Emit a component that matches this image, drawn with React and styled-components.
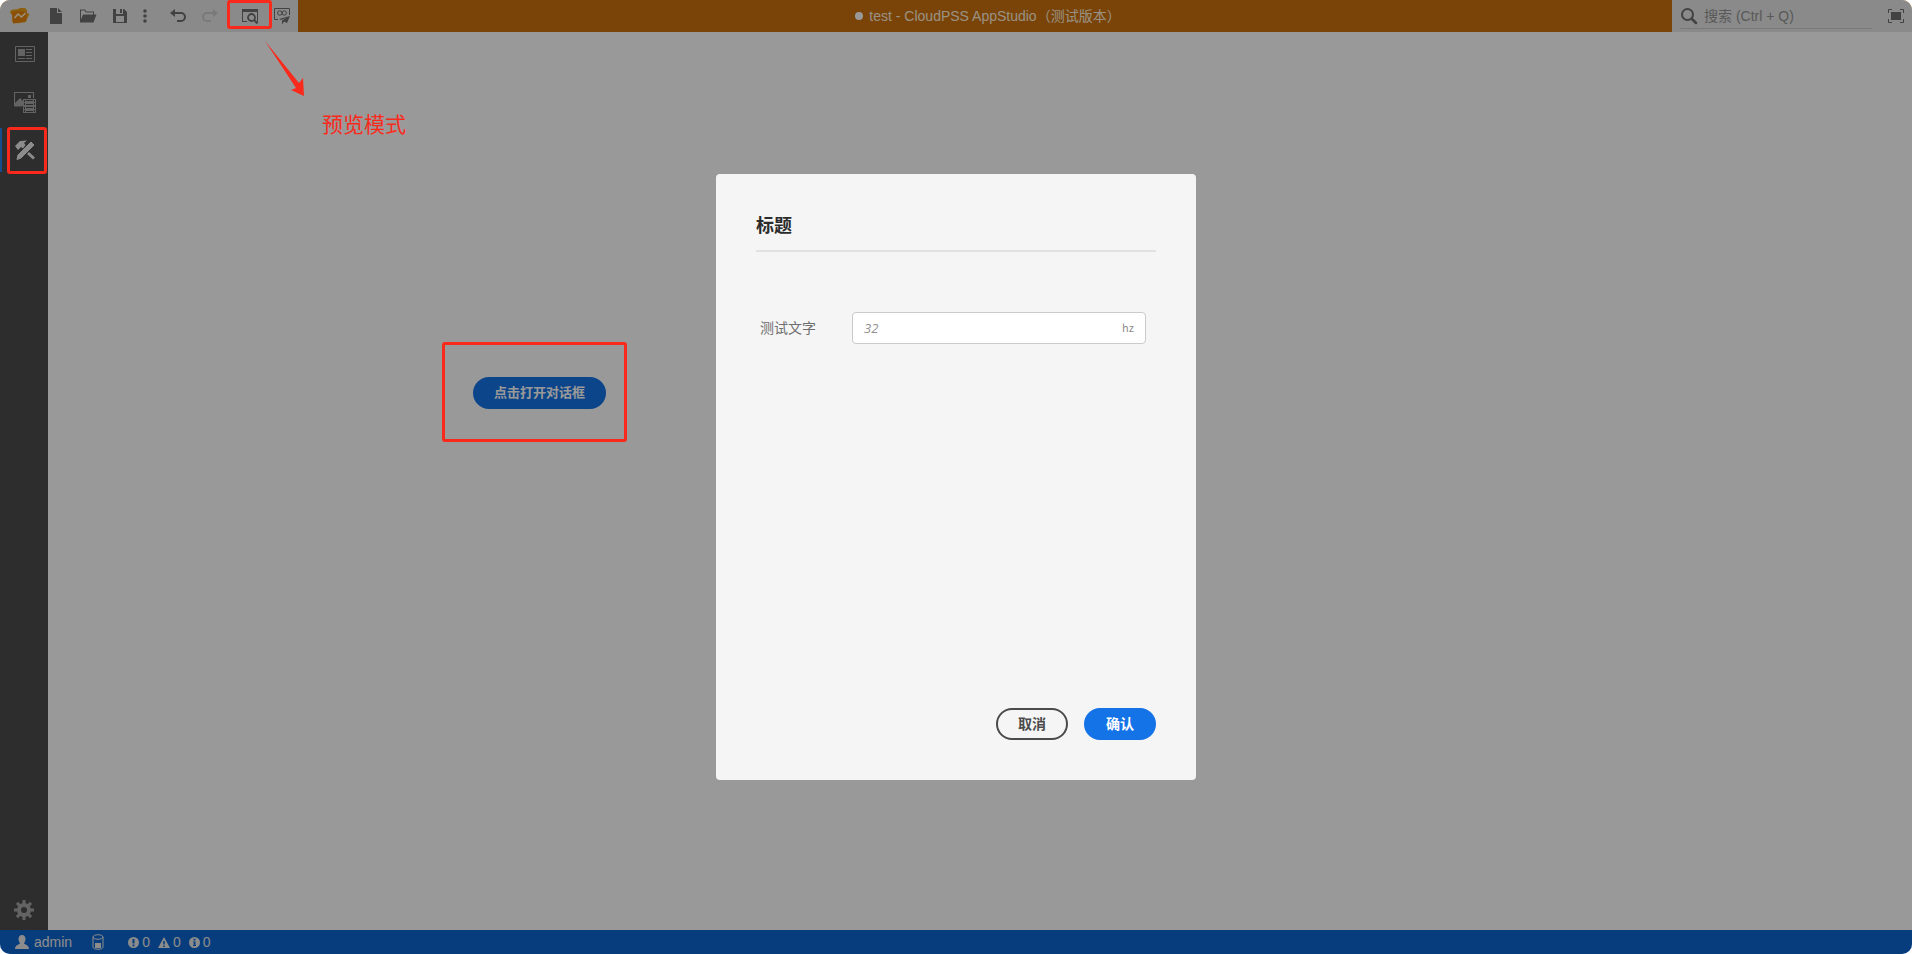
import React from "react";
import styled, { createGlobalStyle } from "styled-components";

const GlobalStyle = createGlobalStyle`
  * {
    box-sizing: border-box;
  }

  body {
    margin: 0;
    background-color: #ffffff;
    font-family: "Liberation Sans", "Noto Sans CJK SC", sans-serif;
    font-size: 14px;
  }

  button,
  input {
    font-family: inherit;
    font-size: inherit;
  }
`;

const Page = styled.div`
  position: relative;
  display: flex;
  flex-direction: column;
  height: 100vh;
  border-radius: 10px;
  overflow: hidden;
`;

// Header
const TopBar = styled.header`
  display: flex;
  height: 32px;
  flex-shrink: 0;
  background-color: #cb710c;
`;

const Toolbar = styled.nav`
  display: flex;
  background-color: #e6e6e6;
`;

const ToolButton = styled.button`
  display: flex;
  align-items: center;
  justify-content: center;
  flex-shrink: 0;
  width: ${(props) => props.$width || 32}px;
  height: 32px;
  margin: 0 ${(props) => props.$gap || 0}px 0 0;
  padding: 0;
  border: 0;
  background: none;
  color: #6e6e6e;
  cursor: pointer;

  &:disabled {
    color: #cacaca;
  }
`;

const DocTitle = styled.h1`
  flex: 1;
  display: flex;
  align-items: center;
  justify-content: center;
  gap: 6px;
  margin: 0;
  padding-left: 6px;
  color: #fff0dd;
  font-size: 14px;
  font-weight: 400;
  line-height: 20px;
  white-space: pre;
`;

const UnsavedDot = styled.span`
  width: 8px;
  height: 8px;
  border-radius: 50%;
  background-color: #ffffff;
`;

const SearchArea = styled.div`
  display: flex;
  gap: 8px;
  width: 240px;
  padding-left: 8px;
  background-color: #e6e6e6;
`;

const SearchBox = styled.label`
  flex: 1;
  display: flex;
  align-items: center;
  gap: 6px;
  min-width: 0;
  height: 29px;
  padding-top: 3px;
  border-bottom: 1px solid #cacaca;
  color: #6e6e6e;
`;

const SearchInput = styled.input`
  flex: 1;
  min-width: 0;
  padding: 0;
  border: 0;
  outline: 0;
  background: none;

  &::placeholder {
    color: #959595;
    opacity: 1;
  }
`;

// Body
const Body = styled.div`
  flex: 1;
  display: flex;
  min-height: 0;
`;

const SideBar = styled.nav`
  display: flex;
  flex-direction: column;
  gap: 4px;
  width: 48px;
  background-color: #4b4b4b;
`;

const SideButton = styled.button`
  display: flex;
  align-items: center;
  justify-content: center;
  height: 44px;
  padding: 0;
  border: solid ${(props) => (props.$active ? "#2680eb" : "transparent")};
  border-width: 0 0 0 2px;
  background: none;
  color: ${(props) => (props.$active ? "#eaeaea" : "#a5a5a5")};
  cursor: pointer;

  &:last-child {
    height: 40px;
    margin-top: auto;
    border-left: 0;
  }
`;

const Canvas = styled.main`
  position: relative;
  flex: 1;
  background-color: #ffffff;
`;

const Button = styled.button`
  min-width: 72px;
  height: 32px;
  padding: 0 ${(props) => (props.$small ? 19 : 18)}px 2px;
  border: 2px solid ${(props) => (props.$outline ? "#4b4b4b" : "#1473e6")};
  border-radius: 16px;
  background-color: ${(props) => (props.$outline ? "transparent" : "#1473e6")};
  color: ${(props) => (props.$outline ? "#4b4b4b" : "#ffffff")};
  font-family: "Noto Sans CJK SC", sans-serif;
  font-size: ${(props) => (props.$small ? 13 : 14)}px;
  font-weight: 700;
  line-height: 20px;
  cursor: pointer;
`;

// Free placed widget on the canvas
const Widget = styled.div`
  position: absolute;
  left: 425px;
  top: 345px;
`;

// Status bar
const StatusBar = styled.footer`
  display: flex;
  align-items: center;
  height: 24px;
  flex-shrink: 0;
  padding-left: 15px;
  background-color: #0d66d0;
  color: #eaeaea;
`;

const StatusItem = styled.span`
  display: flex;
  align-items: center;
  gap: ${(props) => props.$gap || 3}px;
  margin-right: ${(props) => props.$space || 8}px;
`;

// Dialog
const Overlay = styled.div`
  position: absolute;
  inset: 0;
  display: flex;
  align-items: center;
  justify-content: center;
  background-color: rgba(0, 0, 0, 0.4);
`;

const Dialog = styled.section`
  display: flex;
  flex-direction: column;
  width: 480px;
  min-height: 606px;
  padding: 40px;
  border-radius: 4px;
  background-color: #f5f5f5;
  font-family: "Noto Sans CJK SC", sans-serif;
`;

const DialogTitle = styled.h2`
  margin: 0;
  padding-bottom: 16px;
  border-bottom: 2px solid #e1e1e1;
  color: #2c2c2c;
  font-size: 18px;
  font-weight: 700;
  line-height: 20px;
`;

const Field = styled.div`
  display: flex;
  align-items: center;
  margin-top: 60px;
  padding: 0 10px 0 4px;
`;

const FieldLabel = styled.label`
  width: 92px;
  padding-bottom: 2px;
  color: #6e6e6e;
  font-size: 14px;
  line-height: 20px;
`;

const InputBox = styled.div`
  flex: 1;
  display: flex;
  align-items: center;
  height: 32px;
  padding: 0 11px;
  border: 1px solid #cacaca;
  border-radius: 4px;
  background-color: #ffffff;
`;

const Input = styled.input`
  flex: 1;
  min-width: 0;
  padding: 0;
  border: 0;
  outline: 0;
  background: none;
  font-family: "Open Sans", "Noto Sans", sans-serif;
  font-size: 13px;

  &::placeholder {
    color: #8e8e8e;
    font-style: italic;
    opacity: 1;
  }
`;

const Unit = styled.span`
  padding-bottom: 2px;
  color: #8e8e8e;
  font-size: 11px;
  line-height: 16px;
`;

const DialogFooter = styled.div`
  display: flex;
  justify-content: flex-end;
  gap: 16px;
  margin-top: auto;
`;

// Guide marks drawn over the app
const Marker = styled.div`
  position: absolute;
  left: ${(props) => props.$x}px;
  top: ${(props) => props.$y}px;
  width: ${(props) => props.$w}px;
  height: ${(props) => props.$h}px;
  border: 3px solid #f92a1c;
  border-radius: 3px;
  pointer-events: none;
`;

const Arrow = styled.svg`
  position: absolute;
  left: 264px;
  top: 40px;
`;

const MarkerText = styled.span`
  position: absolute;
  left: 322px;
  top: 108px;
  color: #f92a1c;
  font-family: "Noto Sans CJK SC", sans-serif;
  font-size: 21px;
  line-height: 30px;
`;

const Icon = ({ w = 18, h = 18, children }) => (
  <svg width={w} height={h} viewBox={`0 0 ${w} ${h}`} fill="currentColor" aria-hidden="true">
    {children}
  </svg>
);

const LogoIcon = () => (
  <Icon w={20} h={18}>
    <path d="M4 2.500 8 2l2-1h5l2 2v3l2.500 1L17 12l-1 3-6 1-7 .5L2 13l.5-4L0 5.500 1 3z" fill="#e8a11c" />
    <path d="m2 5 6-1 9 1-1 9-6 1.500-7 .5z" fill="#e8820c" />
    <path d="m4.500 11 3.500-4 3.500 3 4-4" fill="none" stroke="#fff3d0" strokeWidth="1.600" />
  </Icon>
);

const FileIcon = () => (
  <Icon w={12} h={16}>
    <path d="M0 0h7v5h5v11H0zM8 0l4 4H8z" />
  </Icon>
);

const FolderIcon = () => (
  <Icon w={18} h={14}>
    <path d="M1 0.500h5l1.500 2H15V5.500h2.500L14.500 13.500H1zM2 10.500 4 5.500h10v-2H7l-1.500-2H2z" fillRule="evenodd" />
  </Icon>
);

const SaveIcon = () => (
  <Icon w={14} h={14}>
    <path d="M0 0h3v5h7V0h1l3 3v11H0zm3 7v6h8V7zM7 0h2v4H7z" fillRule="evenodd" />
  </Icon>
);

const MoreIcon = () => (
  <Icon w={4} h={14}>
    <circle cx="2" cy="2" r="1.800" />
    <circle cx="2" cy="7" r="1.800" />
    <circle cx="2" cy="12" r="1.800" />
  </Icon>
);

const UndoIcon = () => (
  <Icon w={16} h={14}>
    <path d="M5 0v8L0 4z" />
    <path d="M4 4h7a4 4 0 0 1 0 8H7" fill="none" stroke="currentColor" strokeWidth="2" />
  </Icon>
);

const RedoIcon = () => (
  <Icon w={16} h={14}>
    <path d="M11 0v8l5-4z" />
    <path d="M12 4H5a4 4 0 0 0 0 8h4" fill="none" stroke="currentColor" strokeWidth="2" />
  </Icon>
);

const PreviewIcon = () => (
  <Icon w={16} h={16}>
    <path d="M0 1h16v13h-1V4H1v9h4v1H0z" />
    <circle cx="9.500" cy="9.500" r="3.500" fill="none" stroke="currentColor" strokeWidth="1.800" />
    <path d="m12 12 3.500 3.500" stroke="currentColor" strokeWidth="2" />
  </Icon>
);

const PublishIcon = () => (
  <Icon w={16} h={18}>
    <path d="M4 12.500H.5V1.500h15V8" fill="none" stroke="currentColor" />
    <circle cx="5.800" cy="6" r="2.200" fill="none" stroke="currentColor" />
    <circle cx="10.200" cy="6" r="2.200" fill="none" stroke="currentColor" />
    <path d="m16 9-3 7-3-1.500L8 17.500v-4l5-3-6 2.500-2-1z" />
  </Icon>
);

const SearchIcon = () => (
  <Icon w={18} h={18}>
    <circle cx="7.500" cy="7.500" r="5.500" fill="none" stroke="currentColor" strokeWidth="2" />
    <path d="m12 12 4 4" stroke="currentColor" strokeWidth="2.500" strokeLinecap="round" />
  </Icon>
);

const FullScreenIcon = () => (
  <Icon w={16} h={14}>
    <path d="M.5 4V.5H4m8 0h3.500V4m0 6v3.500H12m-8 0H.5V10" fill="none" stroke="currentColor" />
    <path d="M3 3h10v8H3z" />
  </Icon>
);

const LayoutIcon = () => (
  <Icon w={20} h={16}>
    <path d="M.5.5h19v15H.5z" fill="none" stroke="currentColor" />
    <path d="M3 3h7v7H3zM11 3h6v1h-6zM11 6h6v1h-6zM11 9h6v1h-6zM3 12h7v1H3zM11 12h6v1h-6z" />
  </Icon>
);

const MediaIcon = () => (
  <Icon w={22} h={22}>
    <path d="M.5 15V1.500h19V7M.5 15H8" fill="none" stroke="currentColor" strokeWidth="1.200" />
    <path d="m1 12 5-5 3 3v5H1zM14 4h3v3h-3z" />
    <path
      d="M9 8h13v14H9zm1 1v2h1V9zm0 3v2h1v-2zm0 4v2h1v-2zm0 3v2h1v-2zM20 9v2h1V9zm0 3v2h1v-2zm0 4v2h1v-2zm0 3v2h1v-2zM12 9v5h7V9zm0 7v5h7v-5z"
      fillRule="evenodd"
    />
    <path d="M12 10h7v3h-7zm0 7h7v3h-7z" />
  </Icon>
);

const ToolsIcon = () => (
  <Icon w={20} h={20}>
    <path d="m0 6 5-5 7-.5L9 3l1.500 2L8 8.500 6 7 3 10z" />
    <path d="m16 2 3 3L6 18l-4 1.500L3 15z" stroke="currentColor" />
    <path d="m13 13 6 5.500" stroke="currentColor" strokeWidth="3" />
  </Icon>
);

const GearIcon = () => (
  <Icon w={20} h={20}>
    <circle cx="10" cy="10" r="5" fill="none" stroke="currentColor" strokeWidth="4" />
    {[0, 45, 90, 135].map((angle) => (
      <path
        key={angle}
        d="M10 0v4m0 12v4"
        stroke="currentColor"
        strokeWidth="3"
        transform={`rotate(${angle} 10 10)`}
      />
    ))}
  </Icon>
);

const UserIcon = () => (
  <Icon w={14} h={14}>
    <path d="M7 0c2.500 0 3.500 2 3.500 4S9.500 7.500 9 8.200c0 1.300 5 1.300 5 5.800H0c0-4.500 5-4.500 5-5.800C4.500 7.500 3.500 6 3.500 4S4.500 0 7 0z" />
  </Icon>
);

const DatabaseIcon = () => (
  <Icon w={12} h={16}>
    <path
      d="M1 3v10c0 3 10 3 10 0V3M1 3c0-3 10-3 10 0s-10 3-10 0"
      fill="none"
      stroke="currentColor"
    />
    <path d="M3 9h6v5H3z" />
  </Icon>
);

const ErrorIcon = () => (
  <Icon w={11} h={11}>
    <path d="M5.500 0a5.500 5.500 0 1 0 0 11 5.500 5.500 0 0 0 0-11zM4.500 2h2v4.500h-2zm0 5.500h2v1.700h-2z" fillRule="evenodd" />
  </Icon>
);

const WarningIcon = () => (
  <Icon w={12} h={11}>
    <path d="m6 0 6 11H0zM5.200 4v3.500h1.600V4zm0 4.500V10h1.600V8.500z" fillRule="evenodd" />
  </Icon>
);

const InfoIcon = () => (
  <Icon w={11} h={11}>
    <path d="M5.500 0a5.500 5.500 0 1 0 0 11 5.500 5.500 0 0 0 0-11zm-1 1.800h2v1.700h-2zM4 4.500h2.500V8H7v1H4V8h.7V5.500H4z" fillRule="evenodd" />
  </Icon>
);

const Header = () => {
  return (
    <TopBar>
      <Toolbar>
        <ToolButton $width={40} aria-label="CloudPSS"><LogoIcon /></ToolButton>
        <ToolButton aria-label="新建"><FileIcon /></ToolButton>
        <ToolButton aria-label="打开"><FolderIcon /></ToolButton>
        <ToolButton aria-label="保存"><SaveIcon /></ToolButton>
        <ToolButton $width={18} $gap={8} aria-label="更多"><MoreIcon /></ToolButton>
        <ToolButton aria-label="撤销"><UndoIcon /></ToolButton>
        <ToolButton $gap={8} disabled aria-label="重做"><RedoIcon /></ToolButton>
        <ToolButton aria-label="预览"><PreviewIcon /></ToolButton>
        <ToolButton aria-label="发布"><PublishIcon /></ToolButton>
      </Toolbar>
      <DocTitle>
        <UnsavedDot />
        test - CloudPSS AppStudio（测试版本）
      </DocTitle>
      <SearchArea>
        <SearchBox>
          <SearchIcon />
          <SearchInput type="search" placeholder="搜索 (Ctrl + Q)" aria-label="搜索" />
        </SearchBox>
        <ToolButton aria-label="全屏"><FullScreenIcon /></ToolButton>
      </SearchArea>
    </TopBar>
  );
};

const App = () => {
  return (
    <>
      <GlobalStyle />
      <Page>
        <Header />
        <Body>
          <SideBar>
            <SideButton aria-label="布局"><LayoutIcon /></SideButton>
            <SideButton aria-label="资源"><MediaIcon /></SideButton>
            <SideButton $active aria-label="工具"><ToolsIcon /></SideButton>
            <SideButton aria-label="设置"><GearIcon /></SideButton>
          </SideBar>
          <Canvas>
            <Widget>
              <Button $small>点击打开对话框</Button>
            </Widget>
          </Canvas>
        </Body>
        <StatusBar>
          <StatusItem $gap={5} $space={20}><UserIcon />admin</StatusItem>
          <StatusItem $space={24}><DatabaseIcon /></StatusItem>
          <StatusItem><ErrorIcon />0</StatusItem>
          <StatusItem><WarningIcon />0</StatusItem>
          <StatusItem><InfoIcon />0</StatusItem>
        </StatusBar>

        <Overlay>
          <Dialog role="dialog" aria-labelledby="dialog-title">
            <DialogTitle id="dialog-title">标题</DialogTitle>
            <Field>
              <FieldLabel htmlFor="test-text">测试文字</FieldLabel>
              <InputBox>
                <Input id="test-text" placeholder="32" />
                <Unit>hz</Unit>
              </InputBox>
            </Field>
            <DialogFooter>
              <Button $outline>取消</Button>
              <Button>确认</Button>
            </DialogFooter>
          </Dialog>
        </Overlay>

        <Marker $x={227} $y={0} $w={45} $h={29} />
        <Marker $x={7} $y={127} $w={40} $h={47} />
        <Marker $x={442} $y={342} $w={185} $h={100} />
        <Arrow width="42" height="58" viewBox="0 0 42 58">
          <path d="M1 1 35 43l4-5 1 18-13-6 5-2z" fill="#f92a1c" />
        </Arrow>
        <MarkerText>预览模式</MarkerText>
      </Page>
    </>
  );
};

export default App;
